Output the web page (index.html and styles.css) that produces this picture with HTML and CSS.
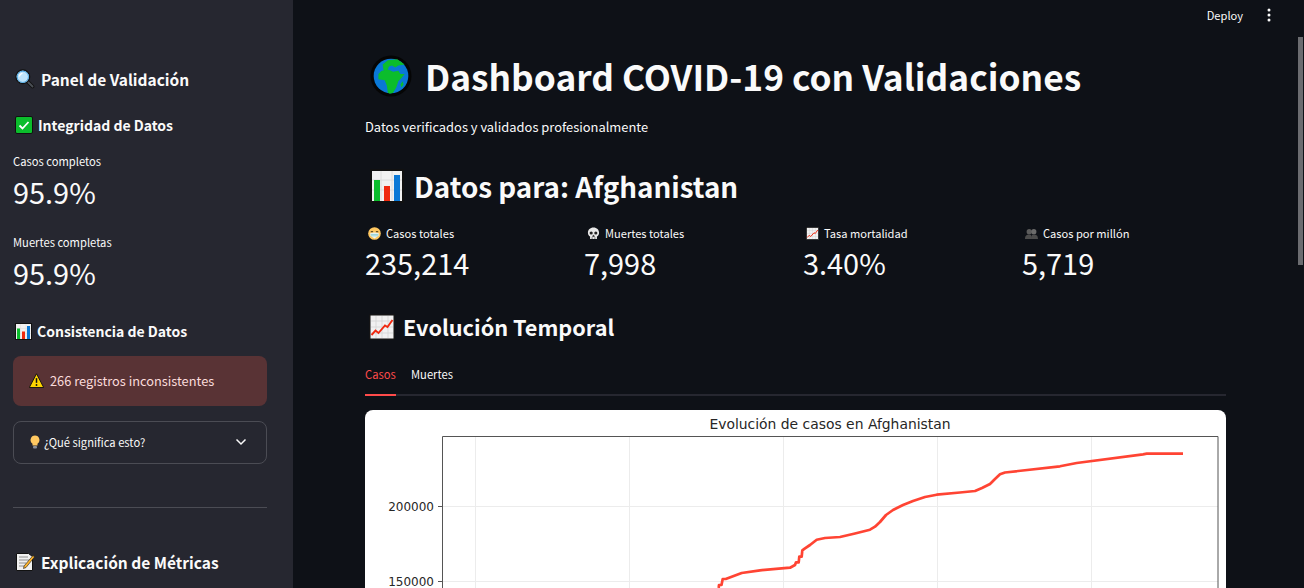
FILE: index.html
```html
<!DOCTYPE html>
<html lang="es">
<head>
<meta charset="utf-8">
<title>Dashboard COVID-19</title>
<link rel="stylesheet" href="styles.css">
</head>
<body>
<svg class="defs" width="0" height="0" aria-hidden="true">
  <defs>
    <symbol id="i-search" viewBox="0 0 32 32">
      <path d="M19 19l9 9" stroke="#111" stroke-width="6" stroke-linecap="round"/>
      <path d="M20 20l8 8" stroke="#4a4f55" stroke-width="3" stroke-linecap="round"/>
      <circle cx="12.500" cy="12.500" r="11" fill="#9fd4f5" stroke="#111" stroke-width="2"/>
      <circle cx="12.500" cy="12.500" r="9" fill="#bfe4fb" stroke="#4aa3e0" stroke-width="1.500"/>
      <path d="M7 12a6 6 0 0 1 5-5" stroke="#fff" stroke-width="2" fill="none"/>
    </symbol>
    <symbol id="i-check" viewBox="0 0 18 18">
      <rect x=".5" y=".5" width="17" height="17" rx="1.500" fill="#0bbd2c" stroke="#111"/>
      <path d="M4.500 9.500l3 3 6-6.500" fill="none" stroke="#fff" stroke-width="1.800"/>
    </symbol>
    <symbol id="i-bars" viewBox="0 0 34 34">
      <rect x="1" y="1" width="32" height="32" fill="#f1f1f1" stroke="#111" stroke-width="2"/>
      <path d="M2 11h30M2 21h30M11 2v30M22 2v30" stroke="#dcdcdc"/>
      <rect x="4" y="11" width="6" height="21" fill="#0bbd2c"/>
      <rect x="14" y="17" width="6" height="15" fill="#f0290f"/>
      <rect x="24" y="6" width="6" height="26" fill="#0a78d6"/>
    </symbol>
    <symbol id="i-warn" viewBox="0 0 16 16">
      <path d="M8 .8L15.700 15.500H.3z" fill="#ffd400" stroke="#111" stroke-linejoin="round"/>
      <path d="M8 5.500v5" stroke="#111" stroke-width="1.600"/>
      <circle cx="8" cy="12.800" r="1" fill="#111"/>
    </symbol>
    <symbol id="i-bulb" viewBox="0 0 10 14">
      <path d="M5 .5a4.500 4.500 0 0 0-2.500 8.200V10.500h5V8.700A4.500 4.500 0 0 0 5 .5z" fill="#ffc861"/>
      <rect x="3" y="11" width="4" height="2.500" rx="1" fill="#8a8f98"/>
    </symbol>
    <symbol id="i-memo" viewBox="0 0 20 20">
      <path d="M1.500 1.500h12l4 3v14h-16z" fill="#f1f1f1" stroke="#111"/>
      <path d="M4 5h9M4 8h10M4 11h7M4 14h5" stroke="#8f8f8f"/>
      <path d="M9 14L18 3.500l1.500 1.500L11 15.500l-2.500 1z" fill="#ffb52e" stroke="#111" stroke-width=".6"/>
    </symbol>
    <symbol id="i-globe" viewBox="0 0 40 40">
      <circle cx="20" cy="20" r="19.500" fill="#050505"/>
      <circle cx="20" cy="20" r="16.500" fill="#0a78d6"/>
      <path d="M12 9l5-4 9-1 7 5-6 1-3 2-3-2-3 1-1 3-4 1zM8 18l3-3 7-1 4 2 5-1 2 3 4 0-3 4-3 3-2 6-3 5-3 1-2-1-1-7-2-5-6-1z" fill="#0bbd2c"/>
      <path d="M31 25l1 3-2 3-1-3z" fill="#0bbd2c"/>
    </symbol>
    <symbol id="i-mask" viewBox="0 0 14 14">
      <circle cx="7" cy="7" r="6.800" fill="#ffc861"/>
      <path d="M3 5h2.500M8.500 5H11" stroke="#3a2a10" stroke-width="1.100"/>
      <path d="M2.500 6.500L7 6l4.500.5v3L7 12.500 2.500 9.500z" fill="#e9f4f4"/>
      <path d="M3 8h8M3 9.500h8" stroke="#6bc0c8" stroke-width=".7"/>
    </symbol>
    <symbol id="i-skull" viewBox="0 0 14 14">
      <path d="M7 .5C3.300.5 1 3 1 6.200c0 2 .9 3.300 2.300 4.100V13h7.400v-2.700c1.400-.8 2.300-2.100 2.300-4.100C13 3 10.700.5 7 .5z" fill="#e8e8e8"/>
      <circle cx="4.500" cy="6.500" r="1.700" fill="#222"/>
      <circle cx="9.500" cy="6.500" r="1.700" fill="#222"/>
      <path d="M7 8.500L6 10.300h2zM5.500 11v2M8.500 11v2" stroke="#222" stroke-width=".6" fill="#222"/>
    </symbol>
    <symbol id="i-up" viewBox="0 0 26 26">
      <rect x=".8" y=".8" width="24.400" height="24.400" fill="#f1f1f1" stroke="#111" stroke-width="1.400"/>
      <path d="M2 7h22M2 13h22M2 19h22M7 2v22M13 2v22M19 2v22" stroke="#d4d4d4" stroke-width=".8"/>
      <path d="M2.500 21l4-4.500 3 2.500L16 11.500l2.500 1.500 5-7" fill="none" stroke="#f0290f" stroke-width="1.900"/>
    </symbol>
    <symbol id="i-busts" viewBox="0 0 14 14">
      <circle cx="4.500" cy="5" r="2.800" fill="#5c5c5c"/>
      <circle cx="9.500" cy="5" r="2.800" fill="#6b6b6b"/>
      <path d="M0 13c0-4 2-5 4.500-5S7 9 7 13zM7 13c0-4 0-5 2.500-5S14 9 14 13z" fill="#4c4c4c"/>
    </symbol>
  </defs>
</svg>

<div class="app">
  <aside class="sidebar">
    <h2 class="side-h2"><svg class="em em-20"><use href="#i-search"/></svg>Panel de Validación</h2>
    <h3 class="side-h3"><svg class="em em-18"><use href="#i-check"/></svg>Integridad de Datos</h3>
    <div class="side-metric">
      <div class="side-label">Casos completos</div>
      <div class="side-value">95.9%</div>
    </div>
    <div class="side-metric">
      <div class="side-label">Muertes completas</div>
      <div class="side-value">95.9%</div>
    </div>
    <h3 class="side-h3 side-h3b"><svg class="em em-17"><use href="#i-bars"/></svg>Consistencia de Datos</h3>
    <div class="alert"><svg class="em em-15"><use href="#i-warn"/></svg>266 registros inconsistentes</div>
    <div class="expander">
      <span class="exp-label"><svg class="em-bulb"><use href="#i-bulb"/></svg>¿Qué significa esto?</span>
      <svg class="chev" viewBox="0 0 12 8"><path d="M1.500 1.500L6 6l4.500-4.500" fill="none" stroke="#fafafa" stroke-width="1.500"/></svg>
    </div>
    <hr class="side-hr">
    <h2 class="side-h2"><svg class="em em-20"><use href="#i-memo"/></svg>Explicación de Métricas</h2>
  </aside>

  <main class="main">
    <header class="topbar">
      <span class="deploy">Deploy</span>
      <svg class="kebab" viewBox="0 0 4 14"><circle cx="2" cy="2" r="1.500"/><circle cx="2" cy="7" r="1.500"/><circle cx="2" cy="12" r="1.500"/></svg>
    </header>
    <div class="scrollbar"></div>
    <div class="content">
      <h1 class="title"><svg class="em-globe"><use href="#i-globe"/></svg>Dashboard COVID-19 con Validaciones</h1>
      <p class="lead">Datos verificados y validados profesionalmente</p>
      <h2 class="h2"><svg class="em-34"><use href="#i-bars"/></svg>Datos para: Afghanistan</h2>
      <div class="metrics">
        <div>
          <div class="m-label"><svg class="em-13"><use href="#i-mask"/></svg>Casos totales</div>
          <div class="m-value">235,214</div>
        </div>
        <div>
          <div class="m-label"><svg class="em-13"><use href="#i-skull"/></svg>Muertes totales</div>
          <div class="m-value">7,998</div>
        </div>
        <div>
          <div class="m-label"><svg class="em-13"><use href="#i-up"/></svg>Tasa mortalidad</div>
          <div class="m-value">3.40%</div>
        </div>
        <div>
          <div class="m-label"><svg class="em-13"><use href="#i-busts"/></svg>Casos por millón</div>
          <div class="m-value">5,719</div>
        </div>
      </div>
      <h3 class="h3"><svg class="em-26"><use href="#i-up"/></svg>Evolución Temporal</h3>
      <div class="tabs">
        <span class="tab tab-on">Casos</span>
        <span class="tab">Muertes</span>
      </div>
      <div class="card">
        <svg class="plot" viewBox="0 0 861 178" width="861" height="178">
          <g class="grid">
            <path d="M110.500 26V178M264.500 26V178M418.500 26V178M572.500 26V178M726.500 26V178M77 96.500H853M77 171.500H853"/>
          </g>
          <path class="spine" d="M77.500 178V26.500H853V178"/>
          <path class="spine" d="M73 96.500H77M73 171.500H77"/>
          <text class="ptitle" x="465" y="19" text-anchor="middle">Evolución de casos en Afghanistan</text>
          <text class="ptick" x="69" y="101" text-anchor="end">200000</text>
          <text class="ptick" x="69" y="176" text-anchor="end">150000</text>
          <path class="pline" d="M353.700 178L354 175H356.500L357.700 169H360.700L376.700 163 395 160.300 425 157.700 430 155 431 152.300H433.700L434.300 146.700H436.700L437.300 140.300 440 138.300 445 135 451.700 129.700 460 128 475 127 490 123.500 505 119.700 510 116.700 515 112 521 105 528 100 538 95 548 91 560 87 571.700 84.700 595 82.500 610 81 617 78 625 74 630 69 635 64.300 640 62.500 695 56.300 711.700 53 778 44.300 781.700 43.700H818"/>
        </svg>
      </div>
    </div>
  </main>
</div>
</body>
</html>
```

FILE: styles.css
```css
* { box-sizing: border-box; }
html, body { margin: 0; height: 100%; overflow: hidden; }
body {
  background: #0e1117;
  color: #fafafa;
  font-family: "Noto Sans CJK SC", "Noto Sans", sans-serif;
}
.defs { display: block; height: 0; }
svg { flex: none; }

.app { display: flex; height: 588px; overflow: hidden; }

/* Sidebar */
.sidebar {
  width: 293px;
  flex: none;
  background: #262730;
  padding: 64px 26px 0 13px;
  overflow: hidden;
}
.side-h2 {
  display: flex; align-items: center;
  margin: 0; padding-left: 2px;
  font-size: 15.500px; font-weight: 600; line-height: 30px;
}
.side-h3 {
  display: flex; align-items: center;
  margin: 18px 0 0; padding-left: 2px;
  font-size: 14px; font-weight: 600; line-height: 26px;
}
.side-h3b { margin-top: 26px; }
.em { display: block; }
.em-20 { width: 20px; height: 20px; margin-right: 6px; }
.em-18 { width: 18px; height: 18px; margin-right: 5px; }
.em-17 { width: 17px; height: 17px; margin-right: 5px; }
.em-15 { width: 15px; height: 15px; margin-right: 6px; }
.side-metric { margin-top: 13px; }
.side-metric + .side-metric { margin-top: 21px; }
.side-label { font-size: 11.200px; line-height: 20px; }
.side-value { font-size: 28.900px; line-height: 40px; }
.alert {
  display: flex; align-items: center;
  height: 50px;
  margin-top: 12px;
  padding: 0 0 2px 16px;
  border-radius: 8px;
  background: #593335;
  color: #fbdcdc;
  font-size: 12.800px;
}
.expander {
  display: flex; align-items: center; justify-content: space-between;
  height: 43px;
  margin-top: 15px;
  padding: 0 19px 2px 16px;
  border: 1px solid #4b4c54;
  border-radius: 8px;
  font-size: 11.200px;
}
.exp-label { display: flex; align-items: center; }
.em-bulb { width: 10px; height: 14px; margin-right: 4px; }
.chev { width: 12px; height: 8px; }
.side-hr { margin: 43px 0 39px; border: 0; border-top: 1px solid #4b4c54; }

/* Main */
.main { flex: 1; position: relative; min-width: 0; overflow: hidden; }
.topbar {
  display: flex; align-items: center; justify-content: flex-end;
  height: 30px;
  padding-right: 33px;
  font-size: 11.100px;
}
.deploy { margin-right: 24px; }
.kebab { width: 4px; height: 14px; fill: #fafafa; }
.scrollbar {
  position: absolute; right: 1px; top: 37px;
  width: 5px; height: 228px;
  background: #6b6c70;
}
.content { padding: 21px 78px 0 72px; }
.title {
  display: flex; align-items: center;
  margin: 0;
  font-size: 35.300px; font-weight: 700; line-height: 50px;
}
.em-globe { width: 42px; height: 42px; margin: 0 13px 0 5px; }
.lead { margin: 15px 0 0; font-size: 12.900px; line-height: 22px; }
.h2 {
  display: flex; align-items: center;
  margin: 26px 0 0;
  font-size: 27.800px; font-weight: 600; line-height: 44px;
}
.em-34 { width: 34px; height: 34px; margin: 0 10px 0 5px; }
.metrics {
  display: grid; grid-template-columns: repeat(4, 1fr); column-gap: 15px;
  margin-top: 15px;
}
.m-label { display: flex; align-items: center; padding-left: 3px; font-size: 11.100px; line-height: 20px; }
.em-13 { width: 13px; height: 13px; margin-right: 5px; }
.m-value { font-size: 28.900px; line-height: 38px; }
.h3 {
  display: flex; align-items: center;
  margin: 29px 0 0;
  font-size: 21.700px; font-weight: 600; line-height: 34px;
}
.em-26 { width: 26px; height: 26px; margin: 0 8px 0 4px; }
.tabs {
  display: flex; gap: 15px;
  height: 37px;
  margin-top: 15px;
  border-bottom: 2px solid #262730;
}
.tab {
  height: 37px; padding-top: 5px;
  font-size: 11.200px; line-height: 20px;
}
.tab-on { width: 31px; color: #ff4b4b; border-bottom: 2px solid #ff4b4b; }
.card {
  margin-top: 14px;
  height: 200px;
  background: #fff;
  border-radius: 8px;
  overflow: hidden;
}
.plot { display: block; }
.grid path { fill: none; stroke: #ececec; stroke-width: 1; }
.spine { fill: none; stroke: #555; stroke-width: 1; }
.ptitle { font-family: "DejaVu Sans", sans-serif; font-size: 13.900px; fill: #262626; }
.ptick { font-family: "DejaVu Sans", sans-serif; font-size: 12px; fill: #262626; }
.pline { fill: none; stroke: #ff4433; stroke-width: 2.700; stroke-linejoin: round; }
```
